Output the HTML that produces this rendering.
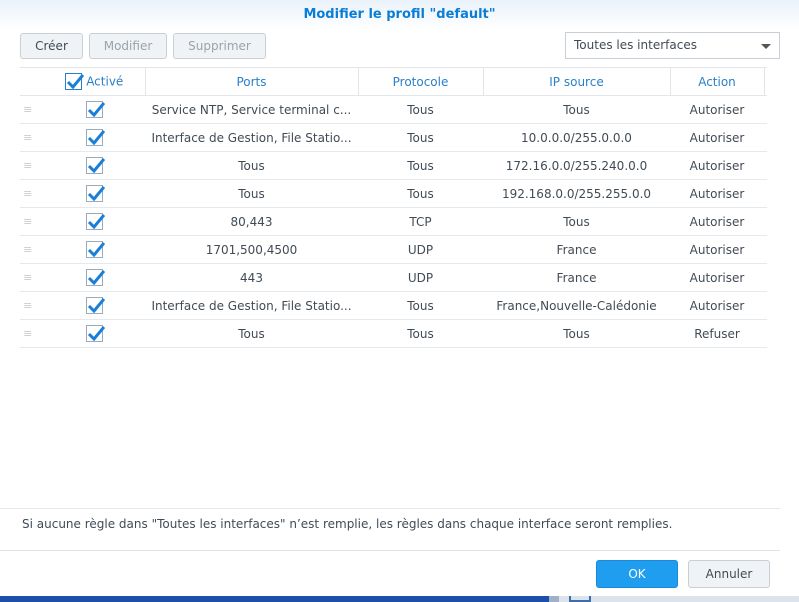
<!DOCTYPE html>
<html><head><meta charset="utf-8"><style>
*{box-sizing:border-box;margin:0;padding:0}
body{width:799px;height:602px;overflow:hidden;background:#fff;font-family:"DejaVu Sans",sans-serif;font-size:12px;color:#414b55;position:relative}
.title{position:absolute;left:0;top:0;width:799px;height:30px;background:linear-gradient(#eaf2fb,#fff);text-align:center;line-height:30px;font-weight:bold;color:#0a7ed6;font-size:13px}
.btn{position:absolute;top:33px;height:26px;border:1px solid #c8cfd6;border-radius:3px;background:#f0f3f6;line-height:24px;text-align:center;font-size:12px}
.sel{position:absolute;left:565px;top:32px;width:215px;height:27px;border:1px solid #c8cfd6;background:#fff;line-height:25px;padding-left:8px}
.sel:after{content:"";position:absolute;right:8px;top:11px;border-left:5px solid transparent;border-right:5px solid transparent;border-top:5px solid #555}
table{position:absolute;left:20px;top:67px;border-collapse:collapse;width:747px}
th{height:28px;color:#2a7fc9;font-weight:normal;border-top:1px solid #e2e6ea;border-bottom:1px solid #e2e6ea;border-left:1px solid #e2e6ea;text-align:center;vertical-align:middle}
th:first-child{border-left:none}
td{height:28px;border-bottom:1px solid #e6e9ec;text-align:center}
.g{color:#ccc;text-align:left;padding-left:3px;font-size:11px}
.cb{display:inline-block;width:17px;height:17px;border:1px solid #9ab;position:relative;vertical-align:middle;background:#fff}
.cb svg{position:absolute;left:0;top:-2px}
.note{position:absolute;left:0;top:508px;width:780px;border-top:1px solid #e6e9ec;border-bottom:1px solid #e0e3e6;height:43px;padding:8px 0 0 22px}
.ok{position:absolute;left:596px;top:560px;width:82px;height:28px;background:#1f9ef0;border:1px solid #1a8ad8;border-radius:3px;color:#fff;text-align:center;line-height:26px}
.an{position:absolute;left:688px;top:560px;width:82px;height:28px;background:#f0f3f6;border:1px solid #c8cfd6;border-radius:3px;text-align:center;line-height:26px}
.bar1{position:absolute;left:0;top:596px;width:549px;height:6px;background:#1c4fa8}
.bar2{position:absolute;left:549px;top:596px;width:10px;height:6px;background:#9fb0c8}
.bar3{position:absolute;left:559px;top:596px;width:240px;height:6px;background:#dde3ea}
.bar3 i{position:absolute;left:10px;top:0;width:22px;height:6px;border:2px solid #3b6fa8;border-top:none}
</style></head><body>
<div class="title">Modifier le profil "default"</div>
<div class="btn" style="left:20px;width:63px">Créer</div>
<div class="btn" style="left:89px;width:78px;color:#9aa3ab">Modifier</div>
<div class="btn" style="left:173px;width:93px;color:#9aa3ab">Supprimer</div>
<div class="sel">Toutes les interfaces</div>
<table>
<colgroup><col style="width:24px"><col style="width:101px"><col style="width:213px"><col style="width:125px"><col style="width:187px"><col style="width:94px"><col></colgroup>
<tr><th></th><th style="border-left:none"><span class="cb" style="border-color:#2a7fc9;margin-right:4px"><svg width="18" height="18" viewBox="0 0 18 18"><path d="M2 10 L7 15 L17 3" stroke="#1a7fd8" stroke-width="3" fill="none"/></svg></span><span style="vertical-align:middle">Activé</span></th><th>Ports</th><th>Protocole</th><th>IP source</th><th>Action</th><th></th></tr>
<tr><td class="g">≡</td><td><span class="cb"><svg width="18" height="18" viewBox="0 0 18 18"><path d="M2 10 L7 15 L17 3" stroke="#1a7fd8" stroke-width="3" fill="none"/></svg></span></td><td>Service NTP, Service terminal c...</td><td>Tous</td><td>Tous</td><td>Autoriser</td><td></td></tr>
<tr><td class="g">≡</td><td><span class="cb"><svg width="18" height="18" viewBox="0 0 18 18"><path d="M2 10 L7 15 L17 3" stroke="#1a7fd8" stroke-width="3" fill="none"/></svg></span></td><td>Interface de Gestion, File Statio...</td><td>Tous</td><td>10.0.0.0/255.0.0.0</td><td>Autoriser</td><td></td></tr>
<tr><td class="g">≡</td><td><span class="cb"><svg width="18" height="18" viewBox="0 0 18 18"><path d="M2 10 L7 15 L17 3" stroke="#1a7fd8" stroke-width="3" fill="none"/></svg></span></td><td>Tous</td><td>Tous</td><td>172.16.0.0/255.240.0.0</td><td>Autoriser</td><td></td></tr>
<tr><td class="g">≡</td><td><span class="cb"><svg width="18" height="18" viewBox="0 0 18 18"><path d="M2 10 L7 15 L17 3" stroke="#1a7fd8" stroke-width="3" fill="none"/></svg></span></td><td>Tous</td><td>Tous</td><td>192.168.0.0/255.255.0.0</td><td>Autoriser</td><td></td></tr>
<tr><td class="g">≡</td><td><span class="cb"><svg width="18" height="18" viewBox="0 0 18 18"><path d="M2 10 L7 15 L17 3" stroke="#1a7fd8" stroke-width="3" fill="none"/></svg></span></td><td>80,443</td><td>TCP</td><td>Tous</td><td>Autoriser</td><td></td></tr>
<tr><td class="g">≡</td><td><span class="cb"><svg width="18" height="18" viewBox="0 0 18 18"><path d="M2 10 L7 15 L17 3" stroke="#1a7fd8" stroke-width="3" fill="none"/></svg></span></td><td>1701,500,4500</td><td>UDP</td><td>France</td><td>Autoriser</td><td></td></tr>
<tr><td class="g">≡</td><td><span class="cb"><svg width="18" height="18" viewBox="0 0 18 18"><path d="M2 10 L7 15 L17 3" stroke="#1a7fd8" stroke-width="3" fill="none"/></svg></span></td><td>443</td><td>UDP</td><td>France</td><td>Autoriser</td><td></td></tr>
<tr><td class="g">≡</td><td><span class="cb"><svg width="18" height="18" viewBox="0 0 18 18"><path d="M2 10 L7 15 L17 3" stroke="#1a7fd8" stroke-width="3" fill="none"/></svg></span></td><td>Interface de Gestion, File Statio...</td><td>Tous</td><td>France,Nouvelle-Calédonie</td><td>Autoriser</td><td></td></tr>
<tr><td class="g">≡</td><td><span class="cb"><svg width="18" height="18" viewBox="0 0 18 18"><path d="M2 10 L7 15 L17 3" stroke="#1a7fd8" stroke-width="3" fill="none"/></svg></span></td><td>Tous</td><td>Tous</td><td>Tous</td><td>Refuser</td><td></td></tr>
</table>
<div class="note">Si aucune règle dans "Toutes les interfaces" n’est remplie, les règles dans chaque interface seront remplies.</div>
<div class="ok">OK</div>
<div class="an">Annuler</div>
<div class="bar1"></div><div class="bar2"></div><div class="bar3"><i></i></div>
</body></html>
